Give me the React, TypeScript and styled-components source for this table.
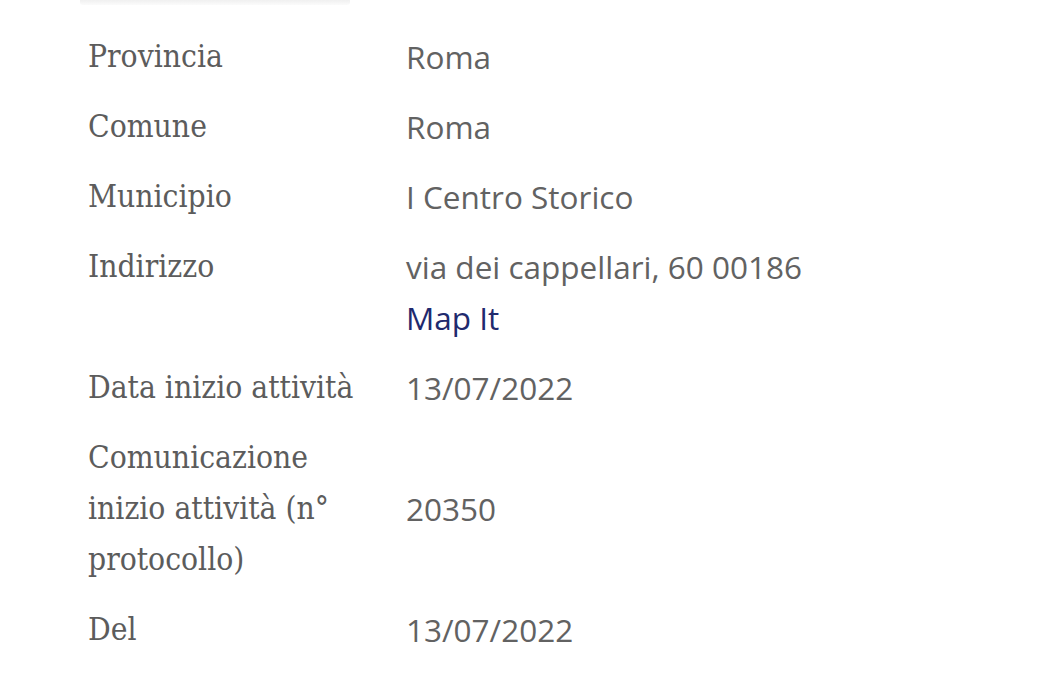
import React from 'react';
import styled, { createGlobalStyle } from 'styled-components';

const GlobalStyle = createGlobalStyle`
  html, body {
    margin: 0;
    padding: 0;
    background: #ffffff;
  }
`;

const Page = styled.div`
  width: 1061px;
  height: 700px;
  overflow: hidden;
  background: #ffffff;
  padding: 0 0 0 88px;
  box-sizing: border-box;
`;

const TopEdge = styled.div`
  width: 270px;
  height: 5px;
  margin-left: -8px;
  background: linear-gradient(to bottom, #f0f0f0, #fbfbfb);
  border-radius: 0 0 3px 3px;
`;

const Table = styled.div`
  display: grid;
  grid-template-columns: 318px 1fr;
  padding-top: 17px;
`;

const Label = styled.div`
  align-self: start;
  padding: 9px 0 10px;
  font-family: 'DejaVu Serif Condensed', 'DejaVu Serif', serif;
  font-size: 31.5px;
  line-height: 51px;
  color: #5c5c5c;
`;

const Value = styled.div`
  align-self: center;
  padding: 9px 0 10px;
  font-family: 'Open Sans', 'Noto Sans', sans-serif;
  font-size: 31.5px;
  line-height: 51px;
  color: #626262;
`;

const MapLink = styled.a`
  display: block;
  color: #1f2a6e;
  text-decoration: none;
`;

type Row = { label: React.ReactNode; value: React.ReactNode };

const rows: Row[] = [
  { label: 'Provincia', value: 'Roma' },
  { label: 'Comune', value: 'Roma' },
  { label: 'Municipio', value: 'I Centro Storico' },
  {
    label: 'Indirizzo',
    value: (
      <>
        via dei cappellari, 60 00186
        <MapLink href="#">Map It</MapLink>
      </>
    ),
  },
  { label: 'Data inizio attività', value: '13/07/2022' },
  {
    label: (
      <>
        Comunicazione
        <br />
        inizio attività (n°
        <br />
        protocollo)
      </>
    ),
    value: '20350',
  },
  { label: 'Del', value: '13/07/2022' },
];

export default function App() {
  return (
    <>
      <GlobalStyle />
      <Page>
        <TopEdge />
        <Table>
          {rows.map((r, i) => (
            <React.Fragment key={i}>
              <Label>{r.label}</Label>
              <Value>{r.value}</Value>
            </React.Fragment>
          ))}
        </Table>
      </Page>
    </>
  );
}
